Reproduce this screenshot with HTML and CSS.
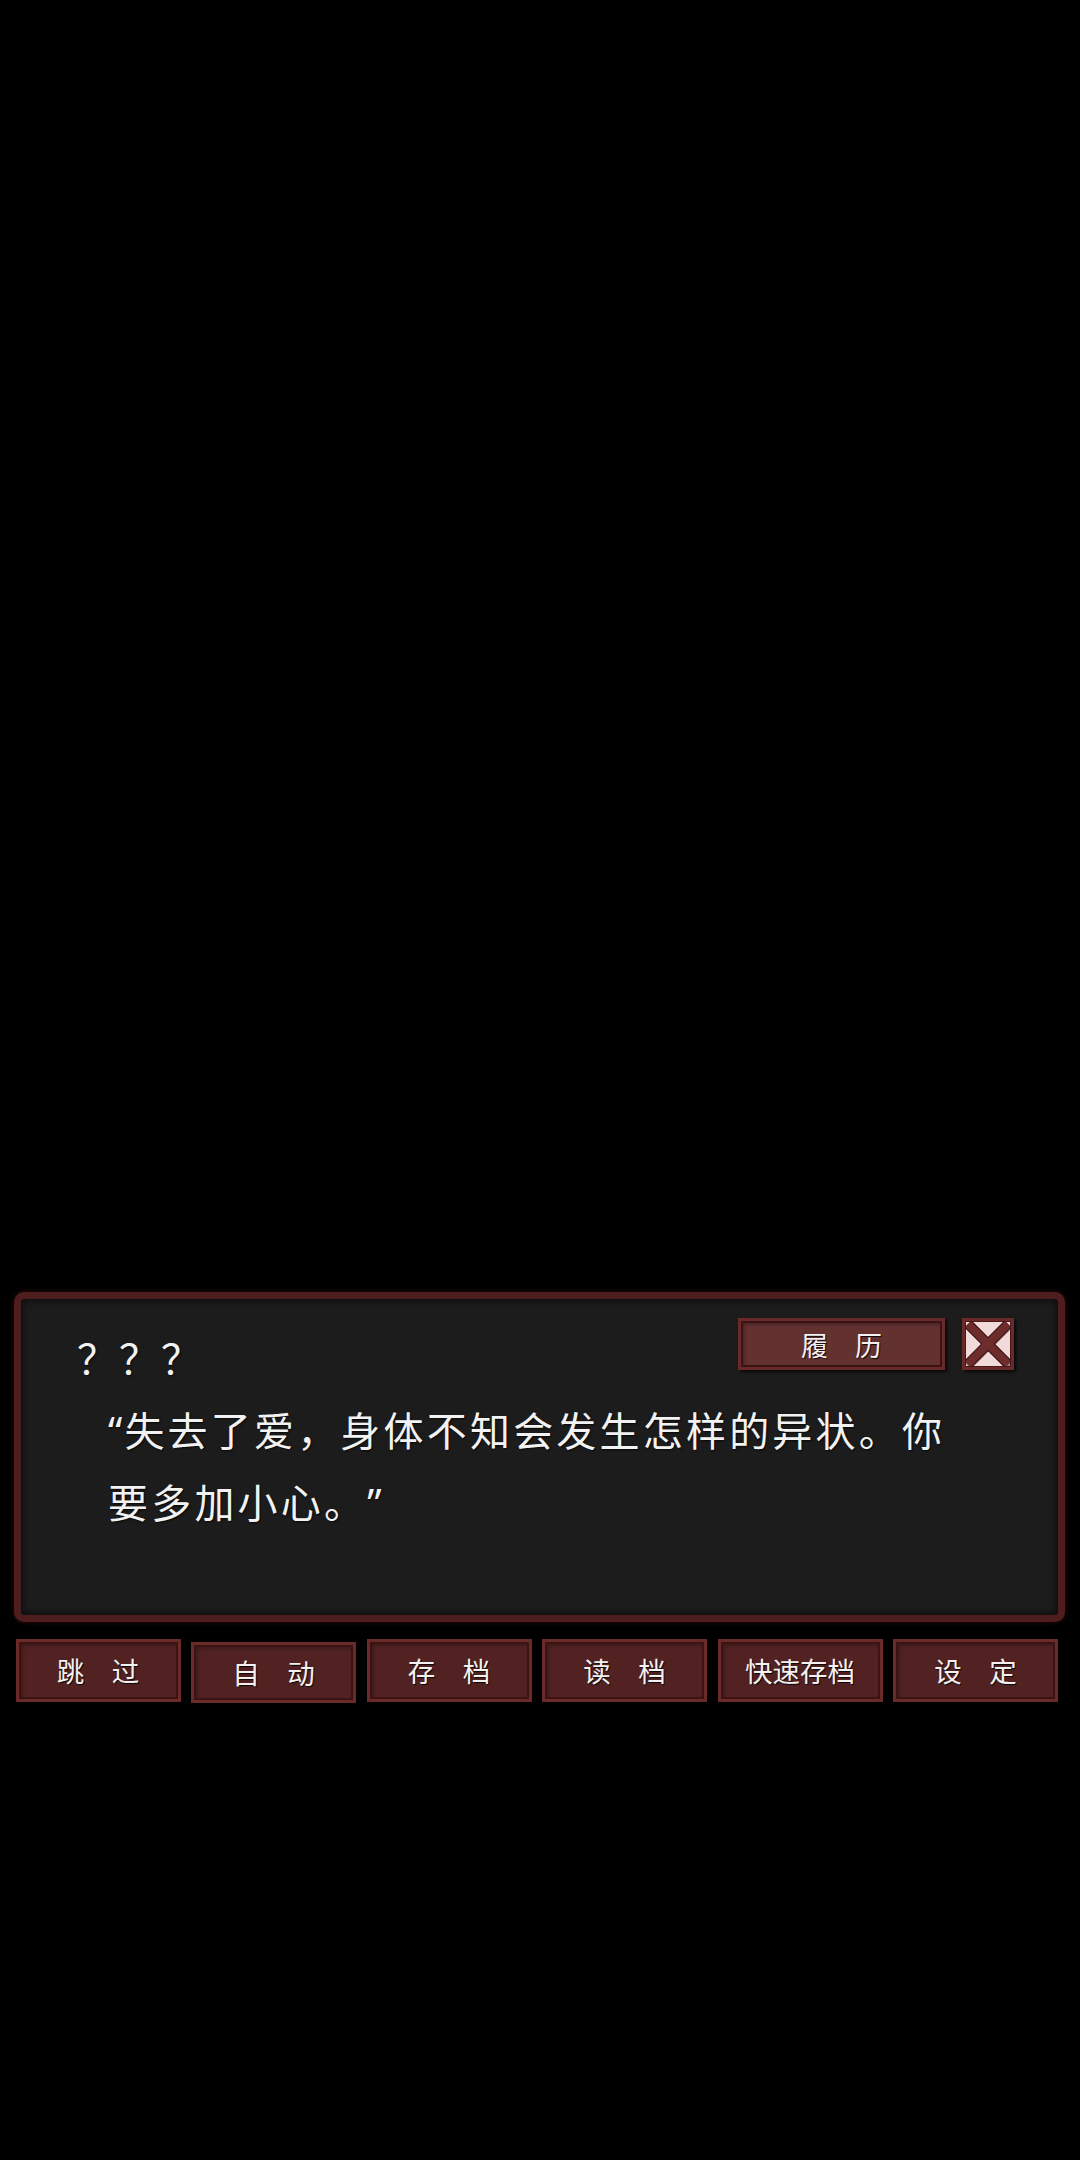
FILE: index.html
```html
<!DOCTYPE html>
<html lang="zh-CN">
<head>
<meta charset="utf-8">
<title>对话</title>
<link rel="stylesheet" href="styles.css">
</head>
<body>
<div class="screen">
  <div class="dialog">
    <div class="panel">
      <div class="header">
        <div class="name">？？？</div>
        <div class="tools">
          <div class="btn history">履　历</div>
          <div class="close">
            <svg viewBox="0 0 46 46" width="46" height="46">
              <g stroke-linecap="butt">
                <line x1="4" y1="4" x2="43" y2="43" stroke="#2a0b0b" stroke-width="10" opacity="0.5" transform="translate(1.5,1.5)"/>
                <line x1="43" y1="4" x2="4" y2="43" stroke="#2a0b0b" stroke-width="10" opacity="0.5" transform="translate(-1.5,1.5)"/>
                <line x1="3" y1="3" x2="43" y2="43" stroke="#3a1111" stroke-width="10"/>
                <line x1="43" y1="3" x2="3" y2="43" stroke="#3a1111" stroke-width="10"/>
                <line x1="3" y1="3" x2="43" y2="43" stroke="#6e2d2d" stroke-width="8"/>
                <line x1="43" y1="3" x2="3" y2="43" stroke="#6e2d2d" stroke-width="8"/>
              </g>
            </svg>
          </div>
        </div>
      </div>
      <p class="line"><span class="q">“</span>失去了爱，身体不知会发生怎样的异状。你<br>要多加小心。<span class="q">”</span></p>
    </div>
  </div>
  <div class="menu">
    <div class="btn menu-btn">跳　过</div>
    <div class="btn menu-btn pressed">自　动</div>
    <div class="btn menu-btn">存　档</div>
    <div class="btn menu-btn">读　档</div>
    <div class="btn menu-btn">快速存档</div>
    <div class="btn menu-btn">设　定</div>
  </div>
</div>
</body>
</html>
```

FILE: styles.css
```css
html, body {
  margin: 0;
  padding: 0;
  background: #000;
}

body {
  width: 1080px;
  height: 2160px;
  overflow: hidden;
  font-family: "Noto Sans CJK SC", "Noto Sans", sans-serif;
  color: #f2f2f2;
  text-spacing-trim: space-all;
}

.screen {
  padding-top: 1292px;
  display: flex;
  flex-direction: column;
}

.dialog {
  margin-left: 14px;
  width: 1051px;
  height: 330px;
  box-sizing: border-box;
  border: 7px solid #4e1e1e;
  border-radius: 10px;
  box-shadow: 0 0 4px 1px #230808;
  background: #1c1c1c;
  overflow: hidden;
}

.panel {
  height: 100%;
  box-sizing: border-box;
  padding: 19px 44px 0 0;
  border-radius: 4px;
  box-shadow: inset 0 0 6px 2px rgba(0, 0, 0, 0.55);
  display: flex;
  flex-direction: column;
}

.header {
  display: flex;
  justify-content: space-between;
  align-items: flex-start;
}

.name {
  margin-top: 14px;
  margin-left: 56px;
  font-size: 40px;
  line-height: 50px;
  letter-spacing: 2px;
  text-shadow: 1px 1px 2px rgba(0, 0, 0, 0.7);
}

.tools {
  display: flex;
  gap: 17px;
}

.btn {
  box-sizing: border-box;
  display: flex;
  align-items: center;
  justify-content: center;
  border: 3px solid #6b2a2a;
  box-shadow: inset 0 0 0 2px #3b1313, inset 3px 3px 4px rgba(0, 0, 0, 0.35), 2px 2px 3px rgba(0, 0, 0, 0.7);
  font-size: 27px;
  color: #f4f0f0;
  text-shadow: 1px 1px 1px rgba(0, 0, 0, 0.85);
  line-height: 1;
}

.history {
  width: 207px;
  height: 52px;
  background: #643131;
}

.close {
  width: 52px;
  height: 52px;
  box-sizing: border-box;
  border: 3px solid #6b2a2a;
  background: #f2dada;
  box-shadow: inset 0 0 0 1px #4a1818, 2px 2px 3px rgba(0, 0, 0, 0.7);
  display: flex;
  align-items: center;
  justify-content: center;
}

.close svg {
  display: block;
}

.line {
  margin: 12px 0 0 87px;
  font-size: 40px;
  line-height: 70px;
  letter-spacing: 3.2px;
  text-shadow: 1px 1px 2px rgba(0, 0, 0, 0.75);
}

.q {
  font-family: "Noto Sans", "DejaVu Sans", sans-serif;
  letter-spacing: 0;
  margin-right: 2px;
}

.menu {
  margin-top: 17px;
  margin-left: 15.5px;
  display: flex;
  gap: 10.5px;
  align-items: flex-start;
}

.menu-btn {
  width: 165px;
  height: 63px;
  background: #522222;
  font-size: 27.5px;
}

.menu-btn.pressed {
  margin-top: 3px;
  height: 61px;
}
```
